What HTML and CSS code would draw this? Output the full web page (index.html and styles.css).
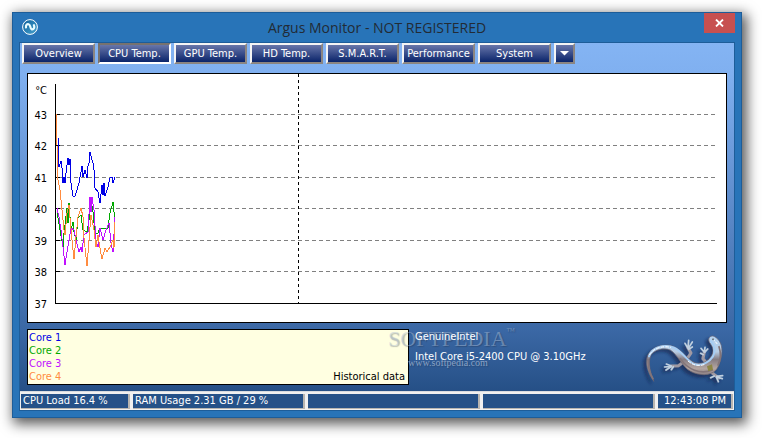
FILE: index.html
```html
<!DOCTYPE html>
<html lang="en">
<head>
<meta charset="utf-8">
<title>Argus Monitor</title>
<link rel="stylesheet" href="styles.css">
</head>
<body>
<main class="window">
  <header class="titlebar">
    <svg class="app-icon" width="16" height="16" viewBox="0 0 16 16" aria-hidden="true">
      <defs><linearGradient id="badge" x2="1" y2="1"><stop stop-color="#0d5f9b"/><stop offset="1" stop-color="#49a4cf"/></linearGradient></defs>
      <circle cx="8" cy="8" r="7.4" fill="url(#badge)" stroke="#fff"/>
      <path d="M4 8.500C3.600 6 5 4.800 6.600 5.200C9 5.900 7.800 9.600 9.800 10.400C11.800 10.900 12.900 8.500 11.900 6.200" fill="none" stroke="#e8fbff" stroke-width="2.200" stroke-linecap="round"/>
    </svg>
    <h1 class="title">Argus Monitor - NOT REGISTERED</h1>
    <button class="close" type="button" aria-label="Close">
      <svg width="9" height="8" viewBox="0 0 9 8"><path d="M1 .5L8 7.500M8 .5L1 7.500" stroke="#fff" stroke-width="1.800"/></svg>
    </button>
  </header>
  <div class="client">
    <nav class="toolbar">
      <button class="tab" type="button">Overview</button>
      <button class="tab active" type="button">CPU Temp.</button>
      <button class="tab" type="button">GPU Temp.</button>
      <button class="tab" type="button">HD Temp.</button>
      <button class="tab" type="button">S.M.A.R.T.</button>
      <button class="tab" type="button">Performance</button>
      <button class="tab" type="button">System</button>
      <button class="tab more" type="button" aria-label="More"><svg width="9" height="5" viewBox="0 0 9 5"><path d="M0 0H9L4.500 4.500Z" fill="#fff"/></svg></button>
    </nav>
    <section class="chart">
      <svg class="plot" viewBox="28 74 698 248" role="img" aria-label="Core temperatures">
        <g class="grid">
          <path d="M60 114.500H717M60 145.500H717M60 177.500H717M60 208.500H717M60 240.500H717M60 271.500H717"/>
          <path class="marker" d="M298.500 74V303"/>
        </g>
        <path class="axis" d="M55.500 84V303.500H717M55 114.500h5M55 145.500h5M55 177.500h5M55 208.500h5M55 240.500h5M55 271.500h5"/>
        <g class="labels">
          <text x="47" y="94">°C</text>
          <text x="47" y="119">43</text>
          <text x="47" y="150">42</text>
          <text x="47" y="182">41</text>
          <text x="47" y="213">40</text>
          <text x="47" y="245">39</text>
          <text x="47" y="276">38</text>
          <text x="47" y="308">37</text>
        </g>
        <g class="series" transform="translate(1 0)">
          <polyline class="core1" points="57,138 57,146 58,167 60,161 61,168 62,183 63,177 64,183 65,173 67,158 68,165 69,159 70,183 72,196 74,196 76,190 78,183 81,166 82,177 84,170 86,178 87,166 88,163 89,152 91,160 92,163 93,170 94,188 97,192 99,203 101,185 102,195 103,183 104,196 107,187 109,178 111,177 112,183 114,177"/>
          <polyline class="core2" points="56,208 57,218 59,230 62,247 63,233 66,208 67,223 68,203 70,230 72,222 73,232 75,240 77,218 80,215 82,230 86,232 88,220 90,200 92,212 94,233 97,233 99,228 107,228 109,213 112,202 113,212 114,220"/>
          <polyline class="core3" points="56,208 58,217 60,230 62,247 64,265 66,252 68,240 70,228 73,230 75,240 78,252 80,247 81,252 83,235 87,232 89,197 90,212 91,197 93,210 95,242 97,247 99,228 102,240 105,230 108,223 110,243 112,252 114,217"/>
          <polyline class="core4" points="55,114 56,145 57,180 59,190 61,210 63,230 64,235 66,213 68,205 69,218 71,240 73,259 75,237 77,217 80,208 82,217 83,238 86,266 88,240 90,215 93,230 95,247 97,235 99,248 101,259 104,248 106,252 109,247 112,240 113,248 114,222"/>
        </g>
      </svg>
    </section>
    <section class="details">
      <div class="legend">
        <ul class="cores">
          <li class="c1">Core 1</li>
          <li class="c2">Core 2</li>
          <li class="c3">Core 3</li>
          <li class="c4">Core 4</li>
        </ul>
        <span>Historical data</span>
      </div>
      <div class="cpu">
        <div class="watermark">
          <div class="brand">SOFTPEDIA<sup>™</sup></div>
          <div class="site">www.softpedia.com</div>
        </div>
        <p>GenuineIntel</p>
        <p>Intel Core i5-2400 CPU @ 3.10GHz</p>
      </div>
      <svg class="gecko" width="87" height="56" viewBox="30 14 261 168" aria-hidden="true">
        <defs>
          <linearGradient id="chrome" x2="0" y2="1"><stop stop-color="#b3d2f2"/><stop offset=".35" stop-color="#b7cde5"/><stop offset=".52" stop-color="#857c82"/><stop offset=".72" stop-color="#b3a5a1"/><stop offset="1" stop-color="#69616b"/></linearGradient>
          <filter id="shade" x="-20%" y="-20%" width="140%" height="140%"><feDropShadow dx="-9" dy="8" stdDeviation="5" flood-color="#091f45" flood-opacity=".6"/></filter>
        </defs>
        <g filter="url(#shade)" stroke-linejoin="round" stroke-linecap="round">
          <g fill="none" stroke="#a099a2" stroke-width="9">
            <path d="M171 104L183 86L174 70"/>
            <path d="M162 112L146 124L123 125"/>
            <path d="M234 121L219 103L223 83"/>
            <path d="M238 139L253 151L266 161"/>
          </g>
          <g fill="none" stroke="#c0d0e0" stroke-width="5">
            <path d="M174 72L165 57M174 71L176 48M175 72L187 53M176 75L187 68"/>
            <path d="M124 125L109 119M124 126L104 128M124 127L108 137M130 127L124 136"/>
            <path d="M223 84L213 72M223 83L225 69M224 84L233 74M220 91L212 87"/>
            <path d="M260 156L278 154M260 158L277 163M259 158L265 172M253 155L242 160"/>
          </g>
          <path d="M71 170C53 145 45 116 53 94C65 65 107 54 136 69C160 82 174 108 197 116C216 121 234 111 245 94C253 80 249 66 239 55C233 44 238 36 247 35C256 35 270 48 274 64C279 87 272 117 259 136C241 156 207 154 182 141C158 129 143 91 121 77C101 69 73 75 62 94C53 119 62 143 71 170Z" fill="url(#chrome)" stroke="#6b6470" stroke-width="2"/>
          <path d="M57 96C68 66 106 60 132 70C158 82 171 111 194 120C218 126 238 113 249 96C258 78 252 63 243 51" fill="none" stroke="#a5cdf5" stroke-width="6"/>
          <path d="M59 91C72 69 101 64 122 69M175 111C189 123 209 127 227 119M248 42L261 58" fill="none" stroke="#fff" stroke-width="3" stroke-dasharray="8 6"/>
          <path d="M55 108C54 130 59 148 69 163M151 103C172 135 211 152 247 137M264 122C273 103 272 81 267 67" fill="none" stroke="#837579" stroke-width="5"/>
          <path d="M231 126L246 120L249 136L235 141Z" fill="#8c8644"/>
          <circle cx="249" cy="45" r="3" fill="#66727d"/>
        </g>
      </svg>
    </section>
    <footer class="status">
      <span>CPU Load 16.4 %</span>
      <span>RAM Usage 2.31 GB / 29 %</span>
      <span></span>
      <span></span>
      <span class="clock">12:43:08 PM</span>
    </footer>
  </div>
</main>
</body>
</html>
```
FILE: styles.css
```css
* { box-sizing: border-box; }
body {
  margin: 0;
  padding: 12px 20px 20px 12px;
  background: #fff;
  font: 11px/13px "DejaVu Sans Condensed", Tahoma, sans-serif;
  color: #fff;
}
h1, p, ul { margin: 0; padding: 0; font-weight: normal; }
.window {
  border: 1px solid #1d5d99;
  padding: 0 6px 6px;
  background: #2874b8;
  box-shadow: 3px 4px 12px 2px rgba(0, 0, 0, .65);
}
.titlebar {
  display: grid;
  grid-template-columns: 31px 1fr 31px;
  height: 29px;
}
.app-icon { margin: 6px 0 0 3px; }
.title {
  font: 14px/29px "Open Sans", "Segoe UI", sans-serif;
  text-align: center;
  color: #222b35;
  white-space: nowrap;
}
.close {
  display: grid;
  place-items: center;
  height: 20px;
  padding: 0;
  border: 0;
  background: #c75050;
}
.client {
  border: 1px solid #1d5d99;
  background: linear-gradient(#84b4f3, #80b0f0 8%, #6d9cdc 28%, #3b68a5 78%, #244e84 96%);
}
.toolbar { display: flex; gap: 3px; padding: 0 2px; }
.tab {
  width: 73px;
  height: 21px;
  padding: 0;
  border: 2px solid;
  border-color: #f4f4f4 #8b8581 #8b8581 #f4f4f4;
  background: linear-gradient(#6876aa, #0a246a);
  font: inherit;
  color: #fff;
  white-space: nowrap;
}
.tab.active { border-color: #77726f #fff #fff #77726f; }
.tab.more { display: grid; place-items: center; width: 21px; }
.chart {
  margin: 9px 7px 6px;
  border: 1px solid #000;
  background: #fff;
}
.plot { display: block; width: 100%; height: auto; }
.grid path, .axis { fill: none; shape-rendering: crispEdges; }
.grid path { stroke: #808080; stroke-dasharray: 4 3; }
.grid .marker { stroke: #000; stroke-dasharray: 3 3; }
.axis { stroke: #000; }
.labels { font-size: 11px; text-anchor: end; fill: #000; }
.series polyline { fill: none; stroke-width: 1; shape-rendering: crispEdges; }
.core1 { stroke: #0000e6; }
.core2 { stroke: #00a800; }
.core3 { stroke: #c010ff; }
.core4 { stroke: #ff8c40; }
.details {
  display: grid;
  grid-template-columns: 382fr 219fr 87px;
  gap: 6px;
  padding: 0 7px 6px;
}
.legend {
  display: flex;
  justify-content: space-between;
  align-items: flex-end;
  height: 56px;
  padding: 1px 3px 1px 1px;
  border: 1px solid #000;
  background: #ffffe1;
  color: #000;
}
.cores { list-style: none; }
.c1 { color: #0000e6; }
.c2 { color: #00a800; }
.c3 { color: #c010ff; }
.c4 { color: #ff8c40; }
.cpu { position: relative; padding-top: 1px; white-space: nowrap; }
.cpu p { position: relative; margin-bottom: 7px; }
.watermark {
  position: absolute;
  left: -27px;
  top: -2px;
  font-family: "Liberation Serif", serif;
  color: rgba(180, 196, 218, .45);
  text-shadow: 1px 1px 1px rgba(30, 40, 60, .3);
}
.brand { font-size: 22px; line-height: 24px; }
.brand sup { font-size: 9px; line-height: 9px; vertical-align: top; }
.site { padding: 6px 0 0 20px; font-size: 10px; line-height: 12px; color: rgba(190, 205, 225, .65); }
.gecko { overflow: visible; }
.status {
  display: grid;
  grid-template-columns: 109px 1fr 1fr 1fr 75px;
  gap: 3px;
  padding: 2px 1px 1px;
  background: #f0f0f0;
  border-top: 1px solid #d8dbe0;
}
.status span {
  height: 15px;
  padding-left: 2px;
  border: solid #b8b5b0;
  border-width: 0 2px 1px 0;
  background: #255188;
  white-space: nowrap;
}
.status .clock { padding-left: 6px; }
```
